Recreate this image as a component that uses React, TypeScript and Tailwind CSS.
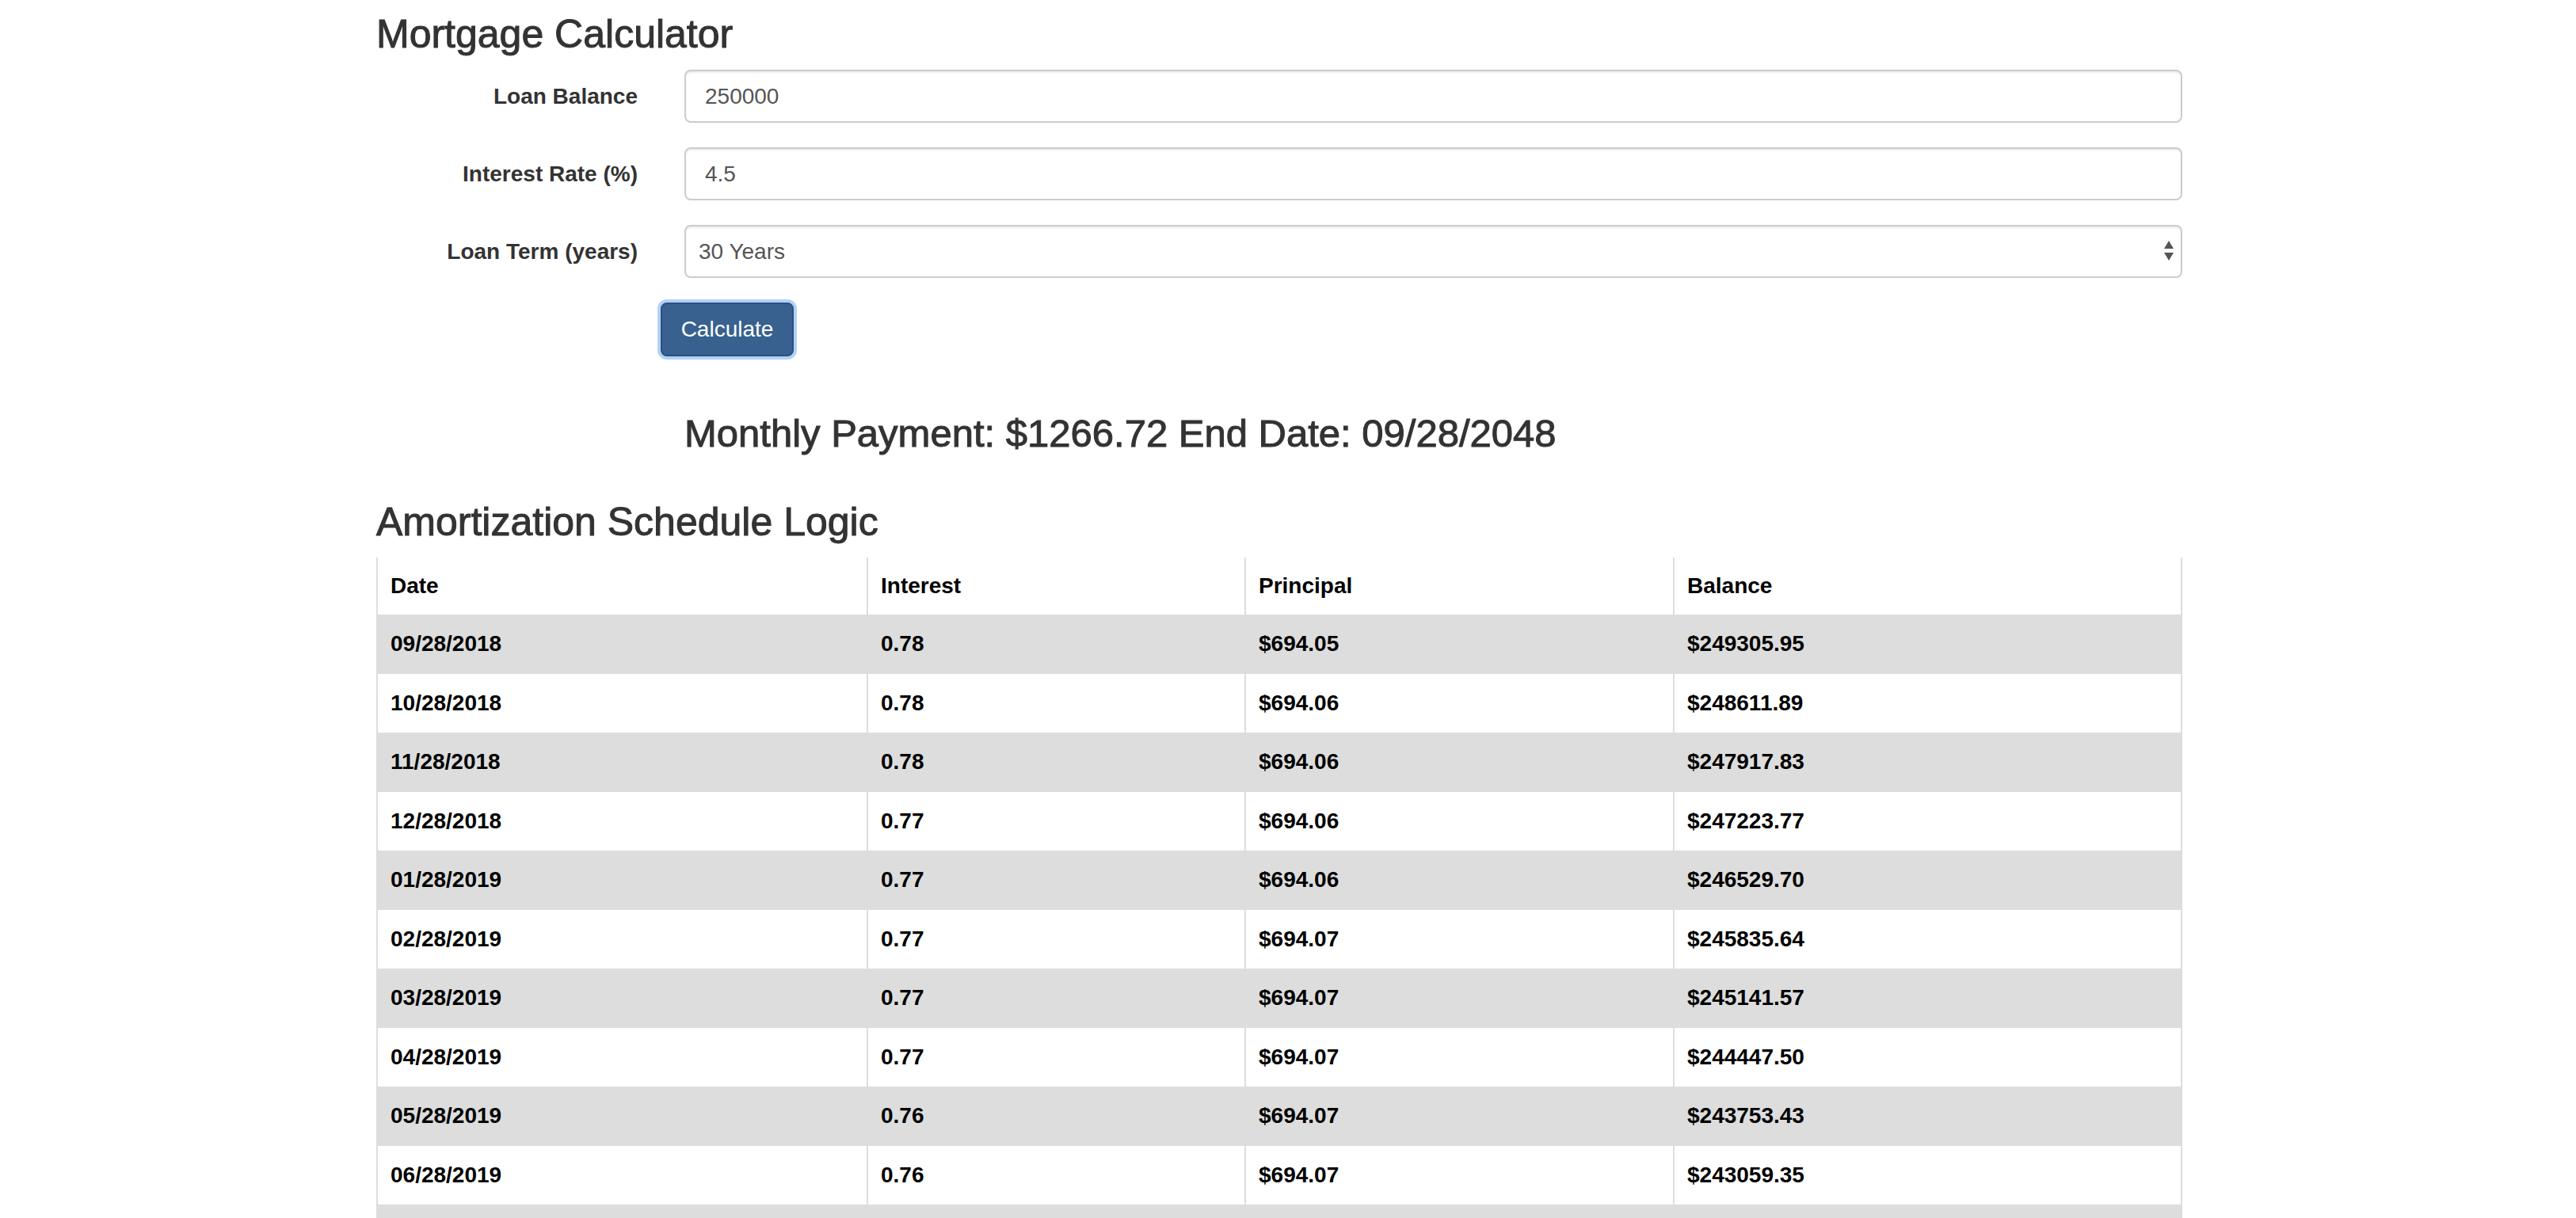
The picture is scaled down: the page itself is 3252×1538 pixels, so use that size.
import { useState } from 'react';

type Row = { date: string; interest: string; principal: string; balance: string };

const rows: Row[] = [
    { date: '09/28/2018', interest: '0.78', principal: '$694.05', balance: '$249305.95' },
    { date: '10/28/2018', interest: '0.78', principal: '$694.06', balance: '$248611.89' },
    { date: '11/28/2018', interest: '0.78', principal: '$694.06', balance: '$247917.83' },
    { date: '12/28/2018', interest: '0.77', principal: '$694.06', balance: '$247223.77' },
    { date: '01/28/2019', interest: '0.77', principal: '$694.06', balance: '$246529.70' },
    { date: '02/28/2019', interest: '0.77', principal: '$694.07', balance: '$245835.64' },
    { date: '03/28/2019', interest: '0.77', principal: '$694.07', balance: '$245141.57' },
    { date: '04/28/2019', interest: '0.77', principal: '$694.07', balance: '$244447.50' },
    { date: '05/28/2019', interest: '0.76', principal: '$694.07', balance: '$243753.43' },
    { date: '06/28/2019', interest: '0.76', principal: '$694.07', balance: '$243059.35' },
    { date: '07/28/2019', interest: '0.76', principal: '$694.08', balance: '$242365.27' },
];

const cols = 'grid grid-cols-[619px_477px_541px_643px]';
const cell = 'flex items-center pl-[16px] border-l-2 border-[#dddddd] last:border-r-2';
const heading = 'font-medium [-webkit-text-stroke:1px_#333333]';

function Field({ label, children }: { label: string; children: React.ReactNode }) {
    return (
        <div className="grid grid-cols-[330px_1fr] gap-x-[59px] items-center">
            <label className="text-right text-[28px] font-bold text-[#333333]">{label}</label>
            {children}
        </div>
    );
}

export default function App() {
    const [balance, setBalance] = useState('250000');
    const [rate, setRate] = useState('4.5');
    const [term, setTerm] = useState('30');

    const inputCls =
        'h-[67px] w-full border-2 border-[#cccccc] rounded-[8px] bg-white px-[24px] text-[28px] text-[#555555] shadow-[inset_0_2px_2px_rgba(0,0,0,0.075)] outline-none';

    return (
        <div className="min-h-screen bg-white font-['Liberation_Sans',Arial,sans-serif] text-[#333333]">
            <div className="ml-[475px] w-[2280px] pt-[16px]">
                <h1 className={`text-[50px] leading-[55px] ${heading}`}>Mortgage Calculator</h1>

                {/* Form */}
                <div className="mt-[17px] flex flex-col gap-[31px]">
                    <Field label="Loan Balance">
                        <input className={inputCls} value={balance} onChange={(e) => setBalance(e.target.value)} />
                    </Field>
                    <Field label="Interest Rate (%)">
                        <input className={inputCls} value={rate} onChange={(e) => setRate(e.target.value)} />
                    </Field>
                    <Field label="Loan Term (years)">
                        <div className="relative">
                            <select
                                className="h-[67px] w-full appearance-none border-2 border-[#cccccc] rounded-[8px] bg-white pl-[16px] text-[28px] text-[#555555] shadow-[inset_0_2px_2px_rgba(0,0,0,0.075)] outline-none"
                                value={term}
                                onChange={(e) => setTerm(e.target.value)}
                            >
                                <option value="15">15 Years</option>
                                <option value="20">20 Years</option>
                                <option value="30">30 Years</option>
                            </select>
                            <svg
                                className="pointer-events-none absolute right-[11px] top-[20px]"
                                width="12"
                                height="26"
                                viewBox="0 0 12 26"
                            >
                                <path d="M0 10 L6 0 L12 10 Z" fill="#555555" />
                                <path d="M0 15 L12 15 L6 25 Z" fill="#555555" />
                            </svg>
                        </div>
                    </Field>
                    <div className="pl-[359px]">
                        <button className="h-[68px] w-[168px] rounded-[8px] border-2 border-[#2c5180] bg-[#38618f] text-[28px] text-white shadow-[0_0_0_4px_rgba(102,163,240,0.5)]">
                            Calculate
                        </button>
                    </div>
                </div>

                <h3 className={`mt-[70px] ml-[389px] text-[49px] leading-[54px] ${heading}`}>
                    Monthly Payment: $1266.72 End Date: 09/28/2048
                </h3>

                <h2 className={`mt-[58px] text-[50px] leading-[55px] ${heading}`}>Amortization Schedule Logic</h2>

                {/* Table */}
                <div className="mt-[17px] text-[28px] font-bold text-black">
                    <div className={`${cols} h-[72px]`}>
                        <div className={cell}>Date</div>
                        <div className={cell}>Interest</div>
                        <div className={cell}>Principal</div>
                        <div className={cell}>Balance</div>
                    </div>
                    {rows.map((r, i) => (
                        <div key={r.date} className={`${cols} h-[74.5px] ${i % 2 === 0 ? 'bg-[#dddddd]' : 'bg-white'}`}>
                            <div className={cell}>{r.date}</div>
                            <div className={cell}>{r.interest}</div>
                            <div className={cell}>{r.principal}</div>
                            <div className={cell}>{r.balance}</div>
                        </div>
                    ))}
                </div>
            </div>
        </div>
    );
}
